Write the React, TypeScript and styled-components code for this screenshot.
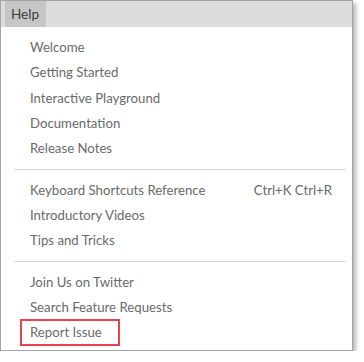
import React from "react";
import styled, { createGlobalStyle } from "styled-components";

const GlobalStyle = createGlobalStyle`
  body {
    margin: 0;
    background: #ffffff;
    font-family: "Lato", "Open Sans", sans-serif;
  }
`;

const StyledFrame = styled.div`
  width: 351px;
  height: 349px;
  border: 1px solid #a3a3a3;
  background: #ffffff;
  box-shadow: 3px 3px 4px rgba(0, 0, 0, 0.28);
  display: flex;
  flex-direction: column;
`;

const StyledMenuBar = styled.div`
  height: 26px;
  background: #dddddd;
  display: flex;
  padding-left: 4px;
`;

const StyledMenuTitle = styled.div`
  background: #c6c6c6;
  color: #3c3c3c;
  font-size: 13.5px;
  line-height: 26px;
  padding: 0 7px 0 6px;
`;

const StyledDropdown = styled.div`
  padding: 8px 0 5px;
  display: flex;
  flex-direction: column;
`;

const StyledItem = styled.div`
  display: flex;
  justify-content: space-between;
  align-items: center;
  height: 25.33px;
  padding: 0 20px 0 29px;
  font-size: 13.2px;
  color: #6a6a6a;
  white-space: nowrap;
`;

const StyledLabel = styled.span<{ $boxed?: boolean }>`
  display: inline-block;
  line-height: 23px;
  ${(p) =>
    p.$boxed
      ? `
    border: 2px solid #e8434a;
    margin: -1px 0 -1px -10px;
    padding: 0 16px 0 8px;
  `
      : ""}
`;

const StyledShortcut = styled.span`
  color: #6a6a6a;
`;

const StyledSeparator = styled.div`
  height: 1px;
  background: #d6d6d6;
  margin: 7.5px 6px 7.5px 13px;
`;

type Entry = { label: string; shortcut?: string; boxed?: boolean };

const groups: Entry[][] = [
  [
    { label: "Welcome" },
    { label: "Getting Started" },
    { label: "Interactive Playground" },
    { label: "Documentation" },
    { label: "Release Notes" },
  ],
  [
    { label: "Keyboard Shortcuts Reference", shortcut: "Ctrl+K Ctrl+R" },
    { label: "Introductory Videos" },
    { label: "Tips and Tricks" },
  ],
  [
    { label: "Join Us on Twitter" },
    { label: "Search Feature Requests" },
    { label: "Report Issue", boxed: true },
  ],
];

export default function App() {
  return (
    <>
      <GlobalStyle />
      <StyledFrame>
        <StyledMenuBar>
          <StyledMenuTitle>Help</StyledMenuTitle>
        </StyledMenuBar>
        <StyledDropdown>
          {groups.map((group, gi) => (
            <React.Fragment key={gi}>
              {gi > 0 && <StyledSeparator />}
              {group.map((item) => (
                <StyledItem key={item.label}>
                  <StyledLabel $boxed={item.boxed}>{item.label}</StyledLabel>
                  {item.shortcut && <StyledShortcut>{item.shortcut}</StyledShortcut>}
                </StyledItem>
              ))}
            </React.Fragment>
          ))}
        </StyledDropdown>
      </StyledFrame>
    </>
  );
}
